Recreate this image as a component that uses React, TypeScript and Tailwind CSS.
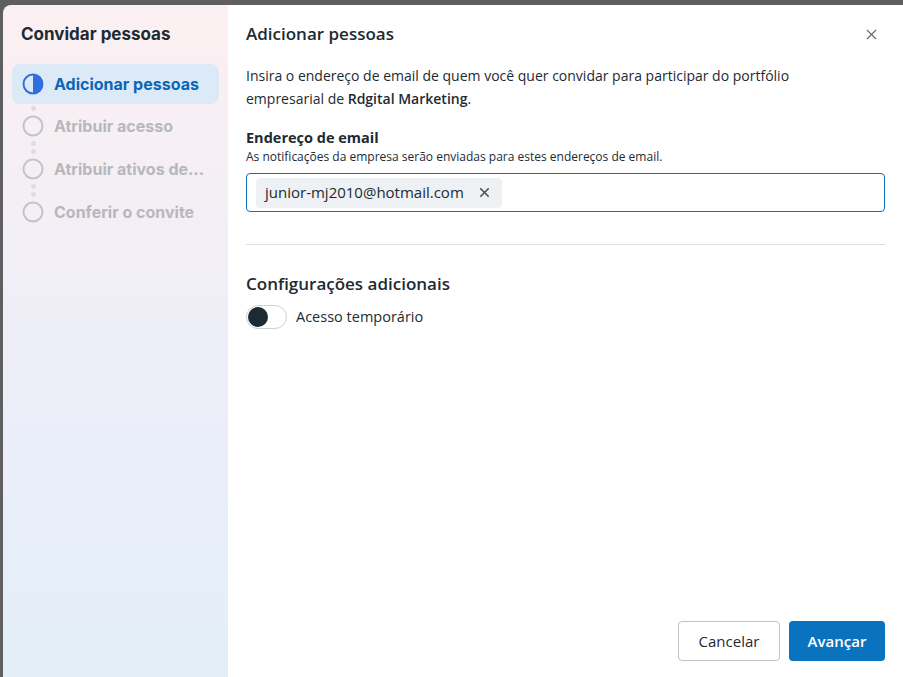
import { X } from "lucide-react";

const steps = [
  { label: "Adicionar pessoas", active: true },
  { label: "Atribuir acesso", active: false },
  { label: "Atribuir ativos de...", active: false },
  { label: "Conferir o convite", active: false },
];

function StepIcon({ active }: { active: boolean }) {
  if (active) {
    return (
      <svg width="22" height="22" viewBox="0 0 22 22">
        <circle cx="11" cy="11" r="9.5" fill="none" stroke="#2f6fe0" strokeWidth="2" />
        <path d="M11 1.5 A9.5 9.5 0 0 1 11 20.5 Z" fill="#2f6fe0" />
      </svg>
    );
  }
  return (
    <svg width="22" height="22" viewBox="0 0 22 22">
      <circle cx="11" cy="11" r="9.5" fill="none" stroke="#c2c4c8" strokeWidth="2" />
    </svg>
  );
}

export default function App() {
  return (
    <div className="w-screen h-screen overflow-hidden bg-[#5f5f61] pl-[3px] pt-[5px] font-['Open_Sans',sans-serif]">
      <div className="flex h-[672px] w-[910px] rounded-tl-lg overflow-hidden">
        {/* sidebar */}
        <div className="w-[225px] shrink-0 bg-gradient-to-b from-[#fcf0f1] via-[#eeeef8] to-[#e3eef9] px-[9px] pt-[19px] font-['Inter',sans-serif]">
          <div className="pl-[9px] text-[17px] font-bold text-[#1c2b33] leading-[20px]">Convidar pessoas</div>
          <div className="mt-[20px] flex flex-col">
            {steps.map((s, i) => (
              <div key={s.label} className="flex flex-col">
                {i === 1 && (
                  <div className="flex h-[9px] items-center pl-[19px]">
                    <span className="w-[5px] h-[5px] rounded-full bg-[#dcdde0]" />
                  </div>
                )}
                {i > 1 && (
                  <div className="flex h-[17px] flex-col justify-center gap-[3px] pl-[19px]">
                    <span className="w-[5px] h-[5px] rounded-full bg-[#dcdde0]" />
                    <span className="w-[5px] h-[5px] rounded-full bg-[#dcdde0]" />
                  </div>
                )}
                <div
                  className={
                    s.active
                      ? "flex h-[40px] items-center gap-[10px] rounded-lg bg-[#dce9f6] pl-[10px]"
                      : "flex h-[26px] items-center gap-[10px] pl-[10px]"
                  }
                >
                  <StepIcon active={s.active} />
                  <span
                    className={
                      s.active
                        ? "text-[16px] font-bold text-[#0a66b8]"
                        : "text-[16px] font-bold text-[#b6b8bc]"
                    }
                  >
                    {s.label}
                  </span>
                </div>
              </div>
            ))}
          </div>
        </div>

        {/* main */}
        <div className="flex flex-col flex-1 bg-white pl-[18px] pr-[25px] pt-[17px] pb-[16px] text-[#1c2b33] w-[682px]">
          <div className="flex items-center justify-between w-[639px] h-[24px]">
            <h1 className="text-[17px] font-semibold leading-[24px]">Adicionar pessoas</h1>
            <X className="w-[17px] h-[17px] text-[#606770] mr-[5px]" strokeWidth={1.5} />
          </div>
          <p className="mt-[18px] text-[14px] leading-[23px] w-[610px]">
            Insira o endereço de email de quem você quer convidar para participar do portfólio empresarial de{" "}
            <span className="font-semibold">Rdgital Marketing</span>.
          </p>
          <div className="mt-[18px] text-[14.5px] font-bold leading-[20px]">Endereço de email</div>
          <div className="text-[12px] leading-[16px] mt-[1px]">
            As notificações da empresa serão enviadas para estes endereços de email.
          </div>
          <div className="mt-[8px] w-[639px] h-[39px] rounded-[4px] border border-[#0a73bf] flex items-center px-[9px]">
            <div className="flex items-center h-[30px] rounded-[4px] bg-[#eef1f4] pl-[9px] pr-[10px] gap-[13px]">
              <span className="text-[15px]">junior-mj2010@hotmail.com</span>
              <X className="w-[15px] h-[15px] text-[#4b4f56]" strokeWidth={2.5} />
            </div>
          </div>
          <div className="mt-[32px] w-[639px] h-px bg-[#dadde1]" />
          <h2 className="mt-[27px] text-[17px] font-semibold leading-[24px]">Configurações adicionais</h2>
          <div className="mt-[9px] flex items-center gap-[9px]">
            <div className="w-[41px] h-[24px] rounded-full border border-[#cdd0d4] flex items-center px-[1px]">
              <span className="w-[20px] h-[20px] rounded-full bg-[#1c2b33]" />
            </div>
            <span className="text-[14.5px]">Acesso temporário</span>
          </div>
          <div className="flex-1" />
          <div className="flex justify-end gap-[9px] w-[639px]">
            <button className="h-[40px] w-[102px] rounded-[4px] border border-[#bec3c9] bg-white text-[15px] text-[#1c2b33]">
              Cancelar
            </button>
            <button className="h-[40px] w-[96px] rounded-[4px] bg-[#0a73bf] text-[15px] font-semibold text-white">
              Avançar
            </button>
          </div>
        </div>
      </div>
    </div>
  );
}
